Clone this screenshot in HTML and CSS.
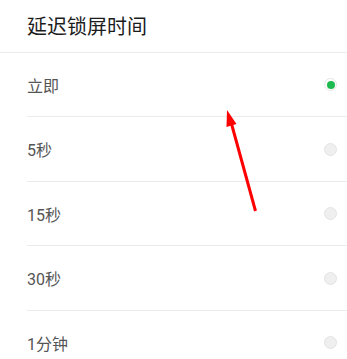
FILE: index.html
```html
<!DOCTYPE html>
<html lang="zh-CN">
<head>
<meta charset="utf-8">
<link rel="stylesheet" href="styles.css">
</head>
<body>
<div class="page">
  <header class="title">延迟锁屏时间</header>
  <ul class="list">
    <li class="row"><span class="label">立即</span><span class="radio on"></span></li>
    <li class="row"><span class="label">5秒</span><span class="radio"></span></li>
    <li class="row"><span class="label">15秒</span><span class="radio"></span></li>
    <li class="row"><span class="label">30秒</span><span class="radio"></span></li>
    <li class="row"><span class="label">1分钟</span><span class="radio"></span></li>
  </ul>
  <svg class="arrow" width="347" height="359" viewBox="0 0 347 359">
    <line x1="255.5" y1="211" x2="231" y2="122" stroke="#ff0000" stroke-width="3"/>
    <polygon points="227,110 236.5,124 226.5,127" fill="#ff0000"/>
  </svg>
</div>
</body>
</html>
```
FILE: styles.css
```css
html, body {
  margin: 0;
  padding: 0;
  background: #ffffff;
}
.page {
  position: relative;
  width: 347px;
  height: 359px;
  overflow: hidden;
  font-family: "Noto Sans CJK SC", "Noto Sans", sans-serif;
}
.title {
  height: 52.5px;
  box-sizing: border-box;
  padding-left: 27px;
  display: flex;
  align-items: center;
  font-size: 20px;
  color: #1c1c1c;
  border-bottom: 1px solid #ebebeb;
}
.list {
  list-style: none;
  margin: 0;
  padding: 0 0 0 27px;
}
.row {
  height: 64.5px;
  box-sizing: border-box;
  display: flex;
  align-items: center;
  justify-content: space-between;
  padding-right: 10px;
  padding-top: 1px;
  border-bottom: 1px solid #ebebeb;
}
.label {
  font-size: 16px;
  color: #555555;
  font-family: Roboto, "Noto Sans CJK SC", sans-serif;
}
.radio {
  width: 13px;
  height: 13px;
  border-radius: 50%;
  box-sizing: border-box;
  background: #efefef;
  border: 1px solid #e4e4e4;
  position: relative;
}
.radio.on {
  background: #ffffff;
  border: 1px solid #e6e6e6;
}
.radio.on::after {
  content: "";
  position: absolute;
  left: 1.5px;
  top: 1.5px;
  width: 8px;
  height: 8px;
  border-radius: 50%;
  background: #1fba4f;
}
.arrow {
  position: absolute;
  left: 0;
  top: 0;
  pointer-events: none;
}
```
